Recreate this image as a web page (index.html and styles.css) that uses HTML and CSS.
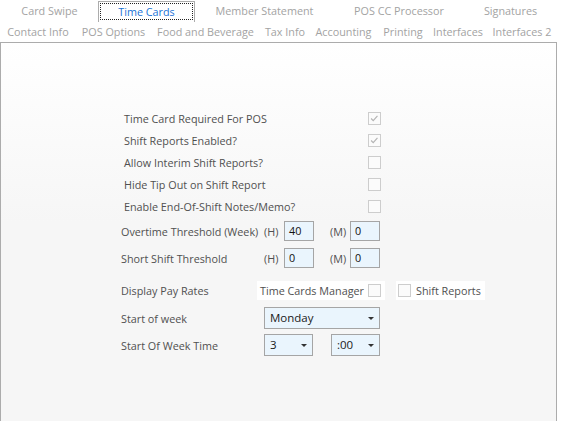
FILE: index.html
```html
<!DOCTYPE html>
<html>
<head>
<meta charset="utf-8">
<link rel="stylesheet" href="styles.css">
</head>
<body>
<div class="window">
  <div class="tabrow row1">
    <div class="tab w99">Card Swipe</div>
    <div class="tab w96 selected"><span class="focus">Time Cards</span></div>
    <div class="tab w139">Member Statement</div>
    <div class="tab w130">POS CC Processor</div>
    <div class="tab w93">Signatures</div>
  </div>
  <div class="tabrow row2">
    <div class="tab" style="width:76px">Contact Info</div>
    <div class="tab" style="width:75px">POS Options</div>
    <div class="tab" style="width:109px">Food and Beverage</div>
    <div class="tab" style="width:50px">Tax Info</div>
    <div class="tab" style="width:67px">Accounting</div>
    <div class="tab" style="width:52px">Printing</div>
    <div class="tab" style="width:58px">Interfaces</div>
    <div class="tab" style="width:70px">Interfaces 2</div>
  </div>
  <div class="panel">
    <div class="form">
      <div class="crow">
        <span class="clabel">Time Card Required For POS</span>
        <span class="cb checked"><svg viewBox="0 0 13 13" width="11" height="11"><path d="M2.5 6.5 L5 9 L10 3.5" fill="none" stroke="#b4b4b4" stroke-width="1.4"/></svg></span>
      </div>
      <div class="crow">
        <span class="clabel">Shift Reports Enabled?</span>
        <span class="cb checked"><svg viewBox="0 0 13 13" width="11" height="11"><path d="M2.5 6.5 L5 9 L10 3.5" fill="none" stroke="#b4b4b4" stroke-width="1.4"/></svg></span>
      </div>
      <div class="crow">
        <span class="clabel">Allow Interim Shift Reports?</span>
        <span class="cb"></span>
      </div>
      <div class="crow">
        <span class="clabel">Hide Tip Out on Shift Report</span>
        <span class="cb"></span>
      </div>
      <div class="crow">
        <span class="clabel">Enable End-Of-Shift Notes/Memo?</span>
        <span class="cb"></span>
      </div>

      <div class="irow r-overtime">
        <span class="ilabel">Overtime Threshold (Week)</span>
        <span class="unit">(H)</span>
        <span class="box">40</span>
        <span class="unit um">(M)</span>
        <span class="box">0</span>
      </div>
      <div class="irow r-short">
        <span class="ilabel">Short Shift Threshold</span>
        <span class="unit">(H)</span>
        <span class="box">0</span>
        <span class="unit um">(M)</span>
        <span class="box">0</span>
      </div>

      <div class="prow">
        <span class="plabel">Display Pay Rates</span>
        <span class="wbox wb1">Time Cards Manager <span class="cb small"></span></span>
        <span class="wbox wb2"><span class="cb small"></span> Shift Reports</span>
      </div>

      <div class="srow r-week">
        <span class="ilabel">Start of week</span>
        <span class="select wide">Monday<i class="arrow"></i></span>
      </div>
      <div class="srow r-time">
        <span class="ilabel">Start Of Week Time</span>
        <span class="select narrow">3<i class="arrow"></i></span>
        <span class="select narrow second">:00<i class="arrow"></i></span>
      </div>
    </div>
  </div>
</div>
</body>
</html>
```

FILE: styles.css
```css
* { box-sizing: border-box; }
html, body { margin: 0; padding: 0; }
body {
  width: 562px;
  height: 421px;
  overflow: hidden;
  background: #ffffff;
  font-family: "Open Sans", "Noto Sans", sans-serif;
  font-size: 10.8px;
  color: #505050;
}
.window { width: 562px; height: 421px; }
.tabrow { display: flex; height: 21px; }
.row1 { height: 22px; padding-top: 1px; }
.row2 { height: 20px; }
.tab {
  color: #a3a3a3;
  text-align: center;
  line-height: 20px;
  white-space: nowrap;
  flex: none;
}
.w99 { width: 99px; }
.w96 { width: 96px; }
.w139 { width: 139px; }
.w130 { width: 130px; }
.w93 { width: 93px; }
.tab.selected {
  border: 1px solid #acacac;
  border-bottom: none;
  color: #1a73d6;
  padding: 1px 1px 0 1px;
  line-height: 16px;
  margin-left: -1px;
  width: 97px;
}
.focus {
  display: block;
  border: 1px dotted #222;
  height: 17px;
  line-height: 15px;
}
.panel {
  width: 557px;
  height: 379px;
  border: 1px solid #acacac;
  border-bottom: none;
  background: linear-gradient(#ffffff 0px, #f6f6f6 180px);
}
.form {
  padding-top: 64px;
  padding-left: 120px;
  display: flex;
  flex-direction: column;
}
.crow {
  display: flex;
  align-items: center;
  height: 22px;
}
.clabel {
  width: 247px;
  padding-left: 3px;
  white-space: nowrap;
}
.cb {
  width: 13px;
  height: 13px;
  border: 1px solid #cdcdcd;
  background: #fbfbfb;
  display: inline-flex;
  align-items: center;
  justify-content: center;
  flex: none;
}
.irow, .srow, .prow { display: flex; align-items: center; }
.irow { height: 20px; }
.r-overtime { margin-top: 4px; }
.r-short { margin-top: 7px; }
.ilabel { width: 143px; white-space: nowrap; }
.unit { width: 20px; white-space: nowrap; }
.um { margin-left: 16px; }
.box {
  width: 30px;
  height: 20px;
  border: 1px solid #a5a5a5;
  background: #eaf5fd;
  color: #111;
  padding-left: 4px;
  line-height: 17px;
}
.prow { margin-top: 13px; height: 19px; }
.plabel { width: 136px; white-space: nowrap; }
.wbox {
  background: #ffffff;
  height: 19px;
  display: flex;
  align-items: center;
  white-space: nowrap;
}
.wb1 { width: 128px; padding-left: 3px; gap: 4px; }
.wb2 { width: 89px; margin-left: 11px; padding-left: 2px; gap: 5px; }
.srow { height: 22px; }
.r-week { margin-top: 7px; }
.r-time { margin-top: 5px; }
.select {
  position: relative;
  height: 22px;
  border: 1px solid #a5a5a5;
  background: #eaf5fd;
  color: #1a1a1a;
  padding-left: 5px;
  line-height: 20px;
  font-size: 11.5px;
}
.wide { width: 116px; }
.narrow { width: 49px; }
.second { margin-left: 18px; }
.arrow {
  position: absolute;
  right: 5px;
  top: 9px;
  width: 0;
  height: 0;
  border-left: 3px solid transparent;
  border-right: 3px solid transparent;
  border-top: 3px solid #333;
}
```
